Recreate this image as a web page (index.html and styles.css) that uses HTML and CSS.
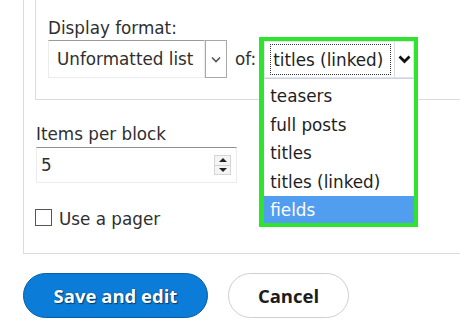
FILE: index.html
```html
<!DOCTYPE html>
<html>
<head>
<meta charset="utf-8">
<link rel="stylesheet" href="styles.css">
</head>
<body>
<div class="panel">
  <div class="fieldset">
    <div class="label">Display format:</div>
    <div class="format-row">
      <div class="select">
        <span class="select-text">Unformatted list</span>
        <span class="select-btn">
          <svg width="10" height="7" viewBox="0 0 10 7"><polyline points="1,1.5 5,5.5 9,1.5" fill="none" stroke="#555" stroke-width="1.6"/></svg>
        </span>
      </div>
      <span class="of">of:</span>
      <div class="combo">
        <div class="combo-head">
          <span class="combo-value">titles (linked)</span>
          <span class="combo-arrow">
            <svg width="13" height="9" viewBox="0 0 13 9"><polyline points="1.5,1.5 6.5,6.5 11.5,1.5" fill="none" stroke="#111" stroke-width="2.8"/></svg>
          </span>
        </div>
        <ul class="combo-list">
          <li>teasers</li>
          <li>full posts</li>
          <li>titles</li>
          <li>titles (linked)</li>
          <li class="selected">fields</li>
        </ul>
        <span class="combo-frame"></span>
      </div>
    </div>
  </div>
  <div class="label items-label">Items per block</div>
  <div class="number">
    <span class="number-value">5</span>
    <span class="spinner">
      <span class="spin-up"></span>
      <span class="spin-down"></span>
    </span>
  </div>
  <label class="check-row">
    <span class="checkbox"></span>
    <span class="check-text">Use a pager</span>
  </label>
</div>
<div class="actions">
  <button class="btn btn-primary">Save and edit</button>
  <button class="btn btn-secondary">Cancel</button>
</div>
</body>
</html>
```

FILE: styles.css
```css
html, body {
  margin: 0;
  padding: 0;
  background: #fff;
  overflow: hidden;
}
body {
  width: 460px;
  height: 320px;
  font-family: "DejaVu Sans", Verdana, sans-serif;
  font-size: 16.8px;
  color: #2f2f2f;
}
.panel {
  margin-left: 23px;
  border-left: 1px solid #dcdcdc;
  border-bottom: 1px solid #dcdcdc;
  padding-bottom: 23px;
}
.fieldset {
  margin-left: 11px;
  border-left: 1px solid #dcdcdc;
  border-bottom: 1px solid #dcdcdc;
  padding: 17px 0 21px 12px;
}
.label {
  line-height: 22px;
  height: 22px;
}
.format-row {
  margin-top: 1px;
  display: flex;
  align-items: flex-end;
}
.select {
  display: flex;
  width: 179px;
  height: 38px;
  box-sizing: border-box;
}
.select-text {
  flex: 1;
  box-sizing: border-box;
  border: 1px solid #ececec;
  border-top-color: #9a9a9a;
  padding-left: 8px;
  line-height: 36px;
  white-space: nowrap;
}
.select-btn {
  width: 22px;
  box-sizing: border-box;
  border: 1px solid #a8a8a8;
  display: flex;
  align-items: center;
  justify-content: center;
}
.of {
  align-self: center;
  margin-left: 8px;
  margin-right: 8px;
}
.combo {
  position: relative;
  width: 150px;
  height: 37px;
}
.combo-head {
  display: flex;
  height: 37px;
  box-sizing: border-box;
  background: #fff;
  border: 1px solid #e4e4e4;
}
.combo-value {
  width: 121px;
  margin: 2px 0 2px 5px;
  box-sizing: border-box;
  border: 1px dotted #333;
  padding-left: 2px;
  line-height: 31px;
  white-space: nowrap;
  color: #1e1e1e;
}
.combo-arrow {
  margin-left: 3px;
  flex: 1;
  border-left: 1px solid #dcdcdc;
  display: flex;
  align-items: center;
  justify-content: center;
}
.combo-list {
  position: absolute;
  top: 37px;
  left: 0;
  right: 0;
  height: 145px;
  margin: 0;
  padding: 3px 0 0;
  box-sizing: border-box;
  list-style: none;
  background: #fff;
  border-top: 1px solid #c9d3e2;
  z-index: 2;
}
.combo-list li {
  height: 28.5px;
  line-height: 28.5px;
  padding-left: 6px;
  color: #1e1e1e;
  white-space: nowrap;
}
.combo-list li.selected {
  background: #519df0;
  color: #fff;
}
.combo-frame {
  position: absolute;
  top: -4px;
  left: -5px;
  right: -4px;
  height: 190px;
  box-sizing: border-box;
  border: 4px solid #2fe42f;
  border-left-width: 5px;
  z-index: 3;
  pointer-events: none;
}
.items-label {
  margin: 23px 0 0 12px;
}
.number {
  margin: 2px 0 0 12px;
  width: 201px;
  height: 36px;
  box-sizing: border-box;
  border: 1px solid #ececec;
  border-top-color: #8f8f8f;
  display: flex;
  align-items: center;
  justify-content: space-between;
  padding: 0 5px 0 4px;
}
.number-value {
  line-height: 34px;
}
.spinner {
  display: flex;
  flex-direction: column;
  width: 17px;
  height: 20px;
  box-sizing: border-box;
  border: 1px solid #d6d6d6;
  background: #f4f4f4;
}
.spin-up, .spin-down {
  flex: 1;
  display: flex;
  align-items: center;
  justify-content: center;
}
.spin-up {
  border-bottom: 1px solid #d0d0d0;
}
.spin-up::before {
  content: "";
  border-left: 4px solid transparent;
  border-right: 4px solid transparent;
  border-bottom: 4px solid #222;
}
.spin-down::before {
  content: "";
  border-left: 4px solid transparent;
  border-right: 4px solid transparent;
  border-top: 4px solid #222;
}
.check-row {
  margin: 25px 0 0 11px;
  display: flex;
  align-items: center;
  height: 22px;
}
.checkbox {
  width: 17px;
  height: 17px;
  box-sizing: border-box;
  border: 1px solid #555;
  background: #fff;
  margin-top: -3px;
}
.check-text {
  margin-left: 7px;
  line-height: 22px;
}
.actions {
  margin: 19px 0 0 23px;
  display: flex;
  gap: 20px;
}
.btn {
  height: 45px;
  border-radius: 23px;
  font-family: "Open Sans", "DejaVu Sans", sans-serif;
  font-weight: 700;
  font-size: 18.5px;
  padding: 0;
  cursor: pointer;
}
.btn-primary {
  width: 185px;
  background: #0b7dd8;
  border: 1px solid #0a5ea6;
  color: #fff;
  text-shadow: 0 0 1px #023d70, 1px 1px 1px #023d70;
}
.btn-secondary {
  width: 121px;
  background: #fff;
  border: 1px solid #cfcfcf;
  color: #1c1c1c;
}
```
